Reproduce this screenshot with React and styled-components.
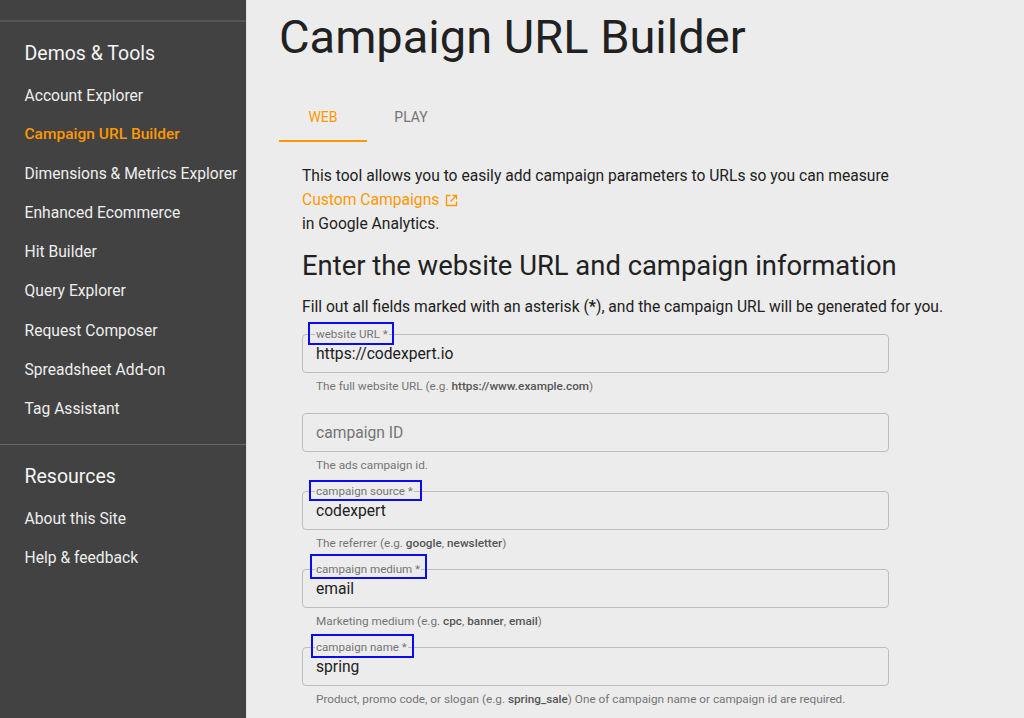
import styled, { createGlobalStyle } from 'styled-components';

const GlobalStyle = createGlobalStyle`
    html, body {
        margin: 0;
        height: 718px;
        overflow: hidden;
        background: #ececec;
        font-family: Roboto, "Liberation Sans", sans-serif;
    }
`;

const demoLinks = [
    'Account Explorer',
    'Campaign URL Builder',
    'Dimensions & Metrics Explorer',
    'Enhanced Ecommerce',
    'Hit Builder',
    'Query Explorer',
    'Request Composer',
    'Spreadsheet Add-on',
    'Tag Assistant',
];

const resourceLinks = ['About this Site', 'Help & feedback'];

// mark = the blue annotation box drawn over the required labels
const fields = [
    {
        label: 'website URL *',
        value: 'https://codexpert.io',
        help: (
            <>
                The full website URL (e.g. <b>https://www.example.com</b>)
            </>
        ),
        mark: { left: 5, top: -13, width: 86, height: 23 },
        gap: 20,
    },
    {
        placeholder: 'campaign ID',
        help: 'The ads campaign id.',
        gap: 19,
    },
    {
        label: 'campaign source *',
        value: 'codexpert',
        help: (
            <>
                The referrer (e.g. <b>google</b>, <b>newsletter</b>)
            </>
        ),
        mark: { left: 6, top: -12, width: 113, height: 21 },
        gap: 19,
    },
    {
        label: 'campaign medium *',
        value: 'email',
        help: (
            <>
                Marketing medium (e.g. <b>cpc</b>, <b>banner</b>,{' '}
                <b>email</b>)
            </>
        ),
        mark: { left: 7, top: -16, width: 117, height: 25 },
        gap: 19,
    },
    {
        label: 'campaign name *',
        value: 'spring',
        help: (
            <>
                Product, promo code, or slogan (e.g. <b>spring_sale</b>) One of
                campaign name or campaign id are required.
            </>
        ),
        mark: { left: 8, top: -14, width: 103, height: 24 },
        gap: 0,
    },
];

function ExternalIcon() {
    return (
        <IconSvg viewBox="0 0 13 13" aria-hidden="true">
            <path d="M5.5 1.5h-4v10h10v-4" />
            <path d="M7.5 1.5h4v4M11.5 1.5l-6 6" />
        </IconSvg>
    );
}

function Field({ label, value, placeholder, help, mark, gap }) {
    return (
        <FieldGroup $gap={gap}>
            <InputBox>
                {label && <FloatLabel>{label}</FloatLabel>}
                {mark && (
                    <Mark
                        $left={mark.left}
                        $top={mark.top}
                        $width={mark.width}
                        $height={mark.height}
                    />
                )}
                <InputText $placeholder={!!placeholder}>
                    {value || placeholder}
                </InputText>
            </InputBox>
            <HelpText>{help}</HelpText>
        </FieldGroup>
    );
}

export default function App() {
    return (
        <Page>
            <GlobalStyle />
            <Sidebar>
                <NavSection>
                    <NavTitle>Demos &amp; Tools</NavTitle>
                    {demoLinks.map((link) => (
                        <NavLink
                            key={link}
                            $active={link === 'Campaign URL Builder'}
                        >
                            {link}
                        </NavLink>
                    ))}
                </NavSection>
                <NavSection>
                    <NavTitle>Resources</NavTitle>
                    {resourceLinks.map((link) => (
                        <NavLink key={link}>{link}</NavLink>
                    ))}
                </NavSection>
            </Sidebar>
            <Main>
                <Title>Campaign URL Builder</Title>
                <Tabs>
                    <Tab $active>WEB</Tab>
                    <Tab>PLAY</Tab>
                </Tabs>
                <Content>
                    <Intro>
                        This tool allows you to easily add campaign parameters
                        to URLs so you can measure
                        <br />
                        <OrangeLink>
                            Custom Campaigns
                            <ExternalIcon />
                        </OrangeLink>
                        <br />
                        in Google Analytics.
                    </Intro>
                    <Heading>Enter the website URL and campaign information</Heading>
                    <Note>
                        Fill out all fields marked with an asterisk (<b>*</b>), and
                        the campaign URL will be generated for you.
                    </Note>
                    {fields.map((field) => (
                        <Field
                            key={field.label || field.placeholder}
                            {...field}
                        />
                    ))}
                </Content>
            </Main>
        </Page>
    );
}

const Page = styled.div`
    display: flex;
    width: 1024px;
    height: 718px;
    overflow: hidden;
`;

const Sidebar = styled.nav`
    flex: none;
    box-sizing: border-box;
    width: 247px;
    height: 718px;
    padding-top: 20px;
    background: #424242;
    border-right: 1px solid #e0e0e0;
`;

const NavSection = styled.section`
    padding: 20px 0 16px;
    border-top: 2px solid #555;

    & + & {
        border-top-width: 1px;
        border-top-color: #666;
        padding-top: 20px;
    }
`;

const NavTitle = styled.h3`
    margin: 0 0 10px 24.5px;
    height: 24px;
    font-size: 19.5px;
    line-height: 24px;
    font-weight: 400;
    color: #f5f5f5;
`;

const NavLink = styled.a`
    display: block;
    height: 39.1px;
    padding-left: 24.5px;
    font-size: ${({ $active }) => ($active ? '15.5px' : '15.65px')};
    line-height: 39.1px;
    font-weight: ${({ $active }) => ($active ? 500 : 400)};
    color: ${({ $active }) => ($active ? '#ff9800' : '#eeeeee')};
    white-space: nowrap;
`;

const Main = styled.main`
    flex: 1;
    min-width: 0;
    padding: 0 0 0 32px;
    color: #212121;
`;

const Title = styled.h1`
    margin: 9px 0 0;
    height: 55px;
    font-size: 47px;
    line-height: 55px;
    font-weight: 400;
`;

const Tabs = styled.div`
    display: flex;
    margin-top: 28px;
`;

const Tab = styled.div`
    box-sizing: border-box;
    width: 88px;
    height: 50px;
    padding-top: 17px;
    text-align: center;
    font-size: 14px;
    line-height: 16px;
    color: ${({ $active }) => ($active ? '#ff9800' : '#757575')};
    border-bottom: 2px solid
        ${({ $active }) => ($active ? '#ff9800' : 'transparent')};
`;

const Content = styled.div`
    padding: 22px 0 0 23px;
`;

const Intro = styled.p`
    margin: 0;
    font-size: 15.65px;
    line-height: 24px;
`;

const OrangeLink = styled.a`
    display: inline-flex;
    align-items: center;
    gap: 6px;
    color: #ff9800;
`;

const IconSvg = styled.svg`
    width: 13px;
    height: 13px;
    fill: none;
    stroke: #ff9800;
    stroke-width: 1.3;
`;

const Heading = styled.h2`
    margin: 12px 0 0;
    font-size: 27.4px;
    line-height: 36px;
    font-weight: 400;
`;

const Note = styled.p`
    margin: 11px 0 0;
    height: 39px;
    font-size: 15.65px;
    line-height: 24px;
    white-space: nowrap;
`;

const FieldGroup = styled.div`
    width: 587px;
    margin-bottom: ${({ $gap }) => $gap}px;
`;

const InputBox = styled.div`
    position: relative;
    box-sizing: border-box;
    height: 39px;
    padding: 0 13px;
    border: 1px solid #bdbdbd;
    border-radius: 4px;
`;

const FloatLabel = styled.span`
    position: absolute;
    left: 12px;
    top: -8px;
    padding: 0 1px;
    font-size: 11.6px;
    line-height: 14px;
    background: #ececec;
    color: #757575;
`;

const Mark = styled.span`
    position: absolute;
    left: ${({ $left }) => $left}px;
    top: ${({ $top }) => $top}px;
    box-sizing: border-box;
    width: ${({ $width }) => $width}px;
    height: ${({ $height }) => $height}px;
    border: 2px solid #0b0bef;
`;

const InputText = styled.div`
    font-size: 15.65px;
    line-height: 37px;
    color: ${({ $placeholder }) => ($placeholder ? '#757575' : '#212121')};
`;

const HelpText = styled.div`
    margin: 6px 0 0 14px;
    height: 14px;
    font-size: 11.75px;
    line-height: 14px;
    color: #757575;
    white-space: nowrap;

    b {
        font-weight: 500;
        color: #555;
    }
`;
